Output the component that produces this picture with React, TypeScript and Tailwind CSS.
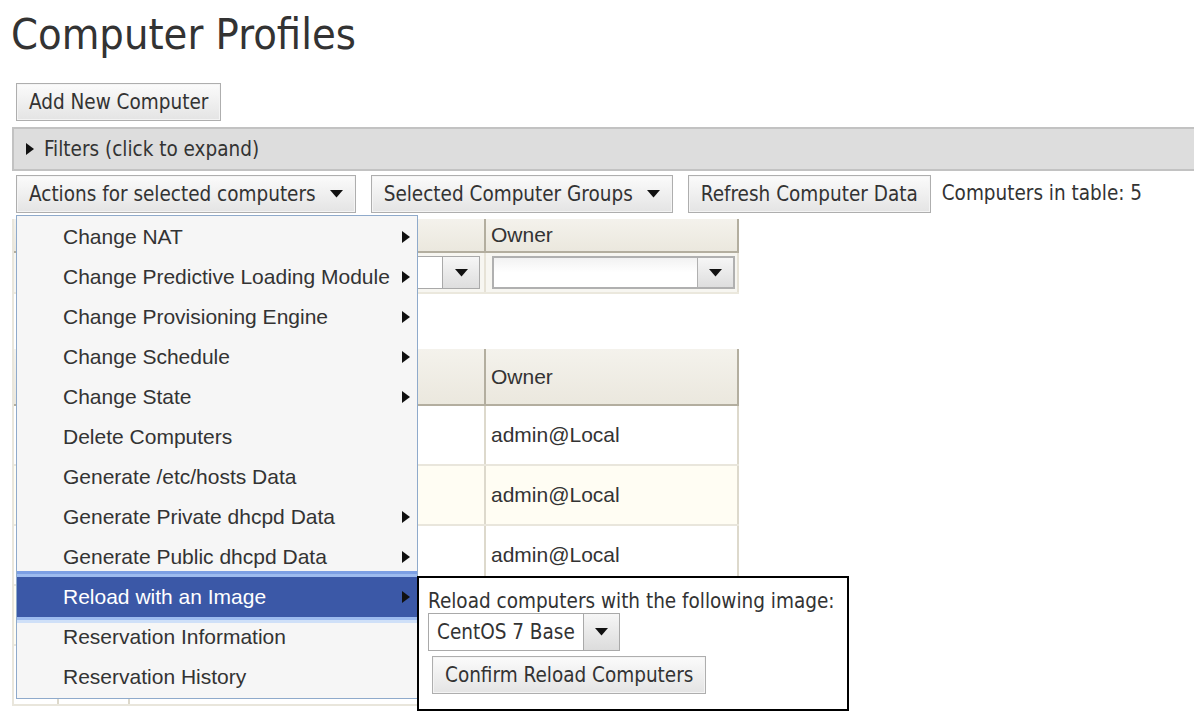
import React from "react";

const tahoma = { fontFamily: '"DejaVu Sans Condensed", "DejaVu Sans", sans-serif' };
const helv = { fontFamily: '"Liberation Sans", Arial, sans-serif' };

function Down({ className = "" }: { className?: string }) {
  return (
    <svg width="13" height="8" viewBox="0 0 13 8" className={className}>
      <path d="M0 0 L13 0 L6.5 7.5 Z" fill="#111" />
    </svg>
  );
}

function Right({ className = "" }: { className?: string }) {
  return (
    <svg width="8" height="12" viewBox="0 0 8 12" className={className}>
      <path d="M0 0 L8 6 L0 12 Z" fill="#111" />
    </svg>
  );
}

const btn =
  "h-[38px] px-[12px] border border-[#aeaeae] bg-gradient-to-b from-[#fbfbfb] to-[#e4e4e4] text-[20.5px] leading-[24px] text-[#333] flex items-center shadow-[inset_0_0_0_1px_#f4f4f4]";

const menuItems: { label: string; sub: boolean }[] = [
  { label: "Change NAT", sub: true },
  { label: "Change Predictive Loading Module", sub: true },
  { label: "Change Provisioning Engine", sub: true },
  { label: "Change Schedule", sub: true },
  { label: "Change State", sub: true },
  { label: "Delete Computers", sub: false },
  { label: "Generate /etc/hosts Data", sub: false },
  { label: "Generate Private dhcpd Data", sub: true },
  { label: "Generate Public dhcpd Data", sub: true },
  { label: "Reload with an Image", sub: true },
  { label: "Reservation Information", sub: false },
  { label: "Reservation History", sub: false },
];

function Cols({ children, className = "" }: { children?: React.ReactNode; className?: string }) {
  return <div className={"grid grid-cols-[45px_71px_356px_253px] " + className}>{children}</div>;
}

export default function App() {
  return (
    <div className="relative w-[1194px] h-[720px] overflow-hidden bg-white text-[#333]" style={tahoma}>
      <h1 className="pl-[11px] pt-[9px] text-[43px] leading-[50px] text-[#333]">Computer Profiles</h1>

      <div className="ml-[16px] mt-[24px] flex">
        <div className={btn}>Add New Computer</div>
      </div>

      <div className="ml-[12px] mt-[6px] h-[44px] border-2 border-r-0 border-[#c2c2c2] bg-[#dddddd] flex items-center pl-[12px] gap-[10px] text-[20.5px] leading-[24px]">
        <Right />
        <span>Filters (click to expand)</span>
      </div>

      <div className="ml-[16px] mt-[4px] flex items-center gap-[15px]">
        <div className={btn + " gap-[14px]"}>
          <span>Actions for selected computers</span>
          <Down />
        </div>
        <div className={btn + " gap-[14px]"}>
          <span>Selected Computer Groups</span>
          <Down />
        </div>
        <div className={btn}>Refresh Computer Data</div>
        <span className="text-[20.5px] leading-[24px] -ml-[4px] -mt-[2px]">Computers in table: 5</span>
      </div>

      {/* tables */}
      <div className="ml-[12px] mt-[6px] border-l-2 border-[#e9e6dc] w-[727px]" style={helv}>
        {/* filter table */}
        <Cols className="h-[34px] bg-gradient-to-b from-[#f4f2ec] to-[#ebe8de] border-b-2 border-[#b3ae9f]">
          <div className="border-r-2 border-[#d9d5c8]" />
          <div className="border-r-2 border-[#d9d5c8]" />
          <div className="border-r-2 border-[#b3ae9f]" />
          <div className="border-r-2 border-[#b3ae9f] flex items-center pl-[5px] text-[21px] leading-[24px]">Owner</div>
        </Cols>
        <Cols className="h-[41px] bg-[#f7f6f1] border-b-2 border-[#ebe8dd]">
          <div className="border-r-2 border-[#e6e2d6]" />
          <div className="border-r-2 border-[#e6e2d6]" />
          <div className="border-r-2 border-[#e6e2d6] flex items-center justify-end pr-[4px]">
            <div className="h-[33px] w-[200px] border border-[#a9a9a9] flex bg-white">
              <div className="flex-1" />
              <div className="w-[37px] border-l border-[#a9a9a9] bg-gradient-to-b from-[#f6f6f6] to-[#dedede] flex items-center justify-center">
                <Down />
              </div>
            </div>
          </div>
          <div className="border-r-2 border-[#e6e2d6] flex items-center pl-[6px] pr-[2px]">
            <div className="h-[33px] w-full border-2 border-[#b0b0b0] flex bg-gradient-to-b from-[#f2f2f2] via-white to-white">
              <div className="flex-1" />
              <div className="w-[36px] border-l border-[#b0b0b0] bg-gradient-to-b from-[#f6f6f6] to-[#dedede] flex items-center justify-center">
                <Down />
              </div>
            </div>
          </div>
        </Cols>

        <div className="h-[55px]" />

        {/* data table */}
        <Cols className="h-[57px] bg-gradient-to-b from-[#f4f2ec] to-[#ebe8de] border-b-2 border-[#b3ae9f]">
          <div className="border-r-2 border-[#d9d5c8]" />
          <div className="border-r-2 border-[#d9d5c8]" />
          <div className="border-r-2 border-[#b3ae9f]" />
          <div className="border-r-2 border-[#b3ae9f] flex items-center pl-[5px] text-[21px] leading-[24px]">Owner</div>
        </Cols>
        {[0, 1, 2, 3, 4].map((i) => (
          <Cols
            key={i}
            className={
              "h-[60px] border-b-2 border-[#e9e6dc] " + (i % 2 === 1 ? "bg-[#fffdf3]" : "bg-white")
            }
          >
            <div className="border-r-2 border-[#ddd9cc]" />
            <div className="border-r-2 border-[#ddd9cc]" />
            <div className="border-r-2 border-[#ddd9cc]" />
            <div className="border-r-2 border-[#ddd9cc] flex items-center pl-[5px] text-[21px] leading-[24px]">
              admin@Local
            </div>
          </Cols>
        ))}
      </div>

      {/* Actions menu */}
      <div
        className="absolute left-[16px] top-[215px] w-[402px] border border-[#8faacb] bg-[#f6f6f6] py-[1px]"
        style={helv}
      >
        {menuItems.map((m) => {
          const active = m.label === "Reload with an Image";
          return (
            <div
              key={m.label}
              className={
                "relative h-[40px] flex items-center pl-[46px] pr-[7px] text-[21px] leading-[24px] " +
                (active
                  ? "bg-[#3b58a7] text-white shadow-[0_-3px_0_#9dbbef,0_-6px_0_#7c9fe4,0_3px_0_#9dbbef,0_6px_0_#cfe0f8]"
                  : "text-[#333]")
              }
            >
              <span className="flex-1 whitespace-nowrap">{m.label}</span>
              {m.sub && <Right />}
            </div>
          );
        })}
      </div>

      {/* Submenu popup */}
      <div className="absolute left-[417px] top-[576px] w-[432px] h-[135px] border-2 border-black bg-white px-[9px] pt-[12px]">
        <div className="text-[20.5px] leading-[23px] whitespace-nowrap">Reload computers with the following image:</div>
        <div className="flex">
          <div className="h-[38px] flex border border-[#a9a9a9]">
            <div className="px-[8px] flex items-center text-[20.5px] leading-[24px] bg-white">CentOS 7 Base</div>
            <div className="w-[36px] border-l border-[#a9a9a9] bg-gradient-to-b from-[#f6f6f6] to-[#dcdcdc] flex items-center justify-center">
              <Down />
            </div>
          </div>
        </div>
        <div className="mt-[5px] ml-[4px] flex">
          <div className={btn}>Confirm Reload Computers</div>
        </div>
      </div>
    </div>
  );
}
